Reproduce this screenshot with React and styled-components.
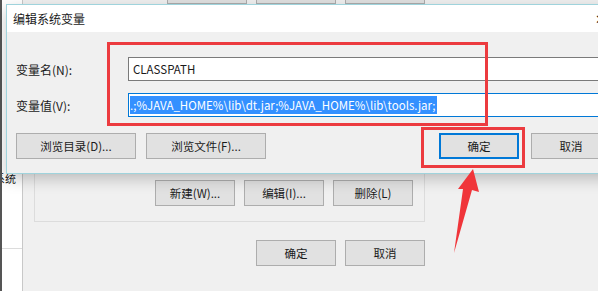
import React from 'react'
import styled, { createGlobalStyle } from 'styled-components'

const GlobalStyle = createGlobalStyle`
  html, body {
    margin: 0;
    padding: 0;
    background: #f0f0f0;
  }
  body {
    font-family: "Noto Sans CJK SC", "Liberation Sans", sans-serif;
    font-size: 11.5px;
    color: #1a1a1a;
  }
`

const Screen = styled.div`
  position: relative;
  width: 598px;
  height: 291px;
  overflow: hidden;
  display: flex;
`

/* window behind the dialog */
const SidePane = styled.div`
  width: 20px;
  background: #fff;
  border-left: 2px solid #555;
  border-right: 1px solid #c8c8c8;
  display: flex;
  flex-direction: column;
  justify-content: flex-end;
  overflow: hidden;
`

const SideText = styled.div`
  margin: 0 0 62px -8px;
  white-space: nowrap;
  font-size: 11px;
`

const SideRule = styled.div`
  height: 42px;
  border-top: 1px solid #dcdcdc;
`

const MainPane = styled.div`
  flex: 1;
  display: flex;
  flex-direction: column;
  padding: 0 0 0 11px;
`

const ButtonRow = styled.div`
  display: flex;
  justify-content: ${p => p.align || 'flex-end'};
  gap: ${p => p.gap || 9}px;
  margin-top: ${p => p.top || 0}px;
`

const WinButton = styled.div`
  box-sizing: border-box;
  width: ${p => p.w || 80}px;
  height: 26px;
  background: #e1e1e1;
  border: 1px solid #adadad;
  display: flex;
  align-items: center;
  justify-content: center;
  white-space: nowrap;
  flex-shrink: 0;
`

const GroupBox = styled.div`
  box-sizing: border-box;
  width: 391px;
  height: 212px;
  margin-top: 6px;
  border: 1px solid #dcdcdc;
  padding: 0 11px 15px 11px;
  display: flex;
  flex-direction: column;
  justify-content: flex-end;
`

const ListBox = styled.div`
  box-sizing: border-box;
  height: 160px;
  border: 1px solid #828790;
  background: #fff;
  overflow: hidden;
  display: flex;
  flex-direction: column;
  justify-content: flex-end;
`

const ListRow = styled.div`
  display: flex;
  gap: 24px;
  padding-left: 5px;
  margin-bottom: -9px;
  height: 16px;
  line-height: 16px;
  font-size: 12px;
`

/* the dialog on top */
const Dialog = styled.div`
  position: absolute;
  left: 6px;
  top: 4px;
  width: 618px;
  box-sizing: border-box;
  border: 1px solid #9fd3dc;
  background: #f0f0f0;
  box-shadow: 0 5px 14px rgba(0, 0, 0, 0.22);
`

const TitleBar = styled.div`
  height: 27px;
  background: #fff;
  display: flex;
  align-items: center;
  justify-content: space-between;
  padding: 0 0 0 6px;
  font-size: 12px;
`

const CloseGlyph = styled.span`
  width: 28px;
  font-size: 13px;
  color: #222;
`

const Body = styled.div`
  padding: 25px 12px 14px 9px;
  display: flex;
  flex-direction: column;
`

const FieldRow = styled.div`
  display: flex;
  align-items: center;
  margin-bottom: ${p => p.mb || 0}px;
`

const Label = styled.label`
  width: 112px;
  flex-shrink: 0;
  font-size: 12px;
`

const TextBox = styled.div`
  flex: 1;
  box-sizing: border-box;
  height: 24px;
  background: #fff;
  border: 1px solid ${p => (p.focused ? '#0078d7' : '#7a7a7a')};
  display: flex;
  align-items: center;
  padding-left: ${p => (p.focused ? 1 : 4)}px;
  white-space: nowrap;
  font-size: 11.5px;
`

const Selected = styled.span`
  background: #3390ff;
  color: #fff;
  line-height: 18px;
  padding-right: 1px;
`

const DialogButton = styled(WinButton)`
  border: ${p => (p.primary ? '2px solid #0078d7' : '1px solid #adadad')};
`

const Spacer = styled.div`
  flex: 1;
`

const Highlight = styled.div`
  position: absolute;
  left: ${p => p.x}px;
  top: ${p => p.y}px;
  width: ${p => p.w}px;
  height: ${p => p.h}px;
  box-sizing: border-box;
  border: 3px solid #ec3b3f;
  pointer-events: none;
`

const Arrow = styled.svg`
  position: absolute;
  left: 0;
  top: 0;
  pointer-events: none;
`

export default function App() {
  return (
    <>
      <GlobalStyle />
      <Screen>
        <SidePane>
          <SideText>系统</SideText>
          <SideRule />
        </SidePane>
        <MainPane>
          <ButtonRow top={-22} style={{ width: 391 }}>
            <WinButton>新建(N)...</WinButton>
            <WinButton>编辑(E)...</WinButton>
            <WinButton>删除(D)</WinButton>
          </ButtonRow>
          <GroupBox>
            <ListBox>
              <ListRow>
                <span>EP_NO_HOST_CH...</span>
                <span>NO</span>
              </ListRow>
            </ListBox>
            <ButtonRow top={16}>
              <WinButton>新建(W)...</WinButton>
              <WinButton>编辑(I)...</WinButton>
              <WinButton>删除(L)</WinButton>
            </ButtonRow>
          </GroupBox>
          <ButtonRow top={18} style={{ width: 391 }}>
            <WinButton>确定</WinButton>
            <WinButton>取消</WinButton>
          </ButtonRow>
        </MainPane>

        <Dialog>
          <TitleBar>
            <span>编辑系统变量</span>
            <CloseGlyph>✕</CloseGlyph>
          </TitleBar>
          <Body>
            <FieldRow mb={12}>
              <Label>变量名(N):</Label>
              <TextBox>CLASSPATH</TextBox>
            </FieldRow>
            <FieldRow mb={16}>
              <Label>变量值(V):</Label>
              <TextBox focused>
                <Selected>.;%JAVA_HOME%\lib\dt.jar;%JAVA_HOME%\lib\tools.jar;</Selected>
              </TextBox>
            </FieldRow>
            <ButtonRow align="flex-start" gap={10}>
              <DialogButton w={120}>浏览目录(D)...</DialogButton>
              <DialogButton w={120}>浏览文件(F)...</DialogButton>
              <Spacer />
              <DialogButton primary>确定</DialogButton>
              <DialogButton style={{ marginLeft: 2 }}>取消</DialogButton>
            </ButtonRow>
          </Body>
        </Dialog>

        <Highlight x={107} y={42} w={381} h={84} />
        <Highlight x={421} y={127} w={104} h={41} />
        <Arrow width="598" height="291" viewBox="0 0 598 291">
          <polygon
            points="473,169 479,192 472,190 454,253 463,189 458,189"
            fill="#f0353a"
          />
        </Arrow>
      </Screen>
    </>
  )
}
